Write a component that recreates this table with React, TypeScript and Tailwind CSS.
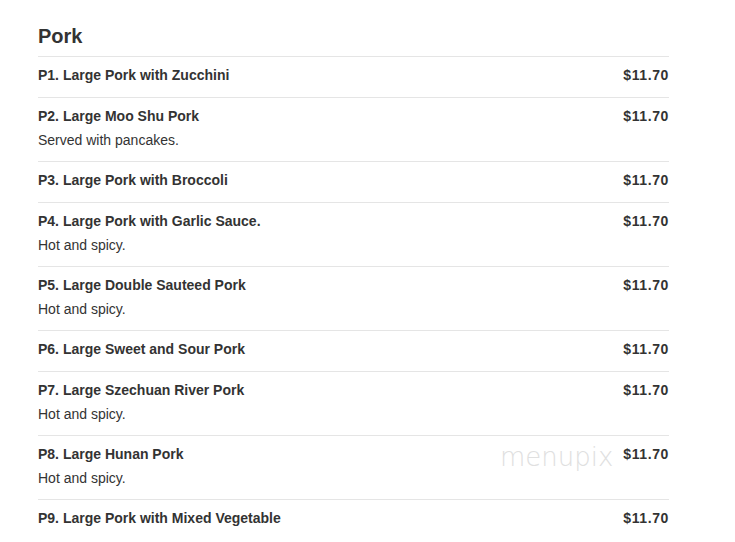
import React from "react";

const items = [
  { name: "P1. Large Pork with Zucchini", desc: "" },
  { name: "P2. Large Moo Shu Pork", desc: "Served with pancakes." },
  { name: "P3. Large Pork with Broccoli", desc: "" },
  { name: "P4. Large Pork with Garlic Sauce.", desc: "Hot and spicy." },
  { name: "P5. Large Double Sauteed Pork", desc: "Hot and spicy." },
  { name: "P6. Large Sweet and Sour Pork", desc: "" },
  { name: "P7. Large Szechuan River Pork", desc: "Hot and spicy." },
  { name: "P8. Large Hunan Pork", desc: "Hot and spicy." },
  { name: "P9. Large Pork with Mixed Vegetable", desc: "" },
];

export default function App() {
  return (
    <div className="bg-white w-[735px] h-[542px] overflow-hidden font-['Liberation_Sans',Arial,sans-serif] text-[#333]">
      <div className="ml-[38px] w-[631px] pt-[22px]">
        <h2 className="text-[20px] font-bold leading-[28px] mb-[6px]">Pork</h2>
        {items.map((it, i) => (
          <div key={i} className="relative border-t border-[#e5e5e5] pt-[8px] pb-[12px] flex justify-between">
            <div>
              <div className="text-[14px] font-bold leading-[20px]">{it.name}</div>
              {it.desc && <div className="text-[14px] leading-[20px] mt-[4px] -mb-[1px]">{it.desc}</div>}
            </div>
            <div className="text-[14px] font-bold leading-[20px] tracking-[0.6px]">$11.70</div>
            {i === 7 && (
              <div className="absolute left-[462px] top-[6px] text-[26px] leading-[30px] text-[#e0e0e0] font-['DejaVu_Sans',sans-serif] font-extralight">
                menupix
              </div>
            )}
          </div>
        ))}
      </div>
    </div>
  );
}
